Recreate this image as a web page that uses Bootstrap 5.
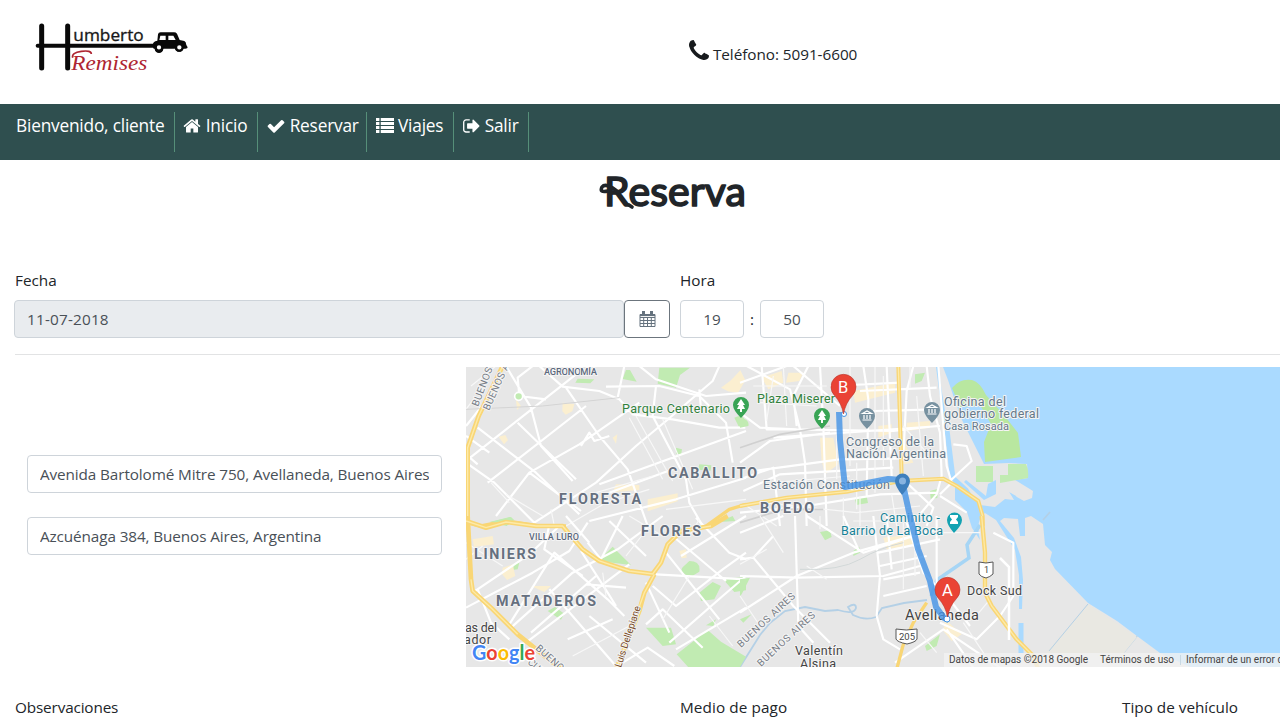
<!DOCTYPE html>
<html lang="es">
<head>
<meta charset="utf-8">
<meta name="viewport" content="width=device-width, initial-scale=1">
<title>Humberto Remises - Reserva</title>
<link href="https://cdn.jsdelivr.net/npm/bootstrap@5.3.0/dist/css/bootstrap.min.css" rel="stylesheet">
<style>
html,body{overflow:hidden;height:720px}
body{font-family:"Open Sans","Noto Sans",sans-serif;font-size:15.3px;color:#212529;line-height:24px}
.page-clip{width:100%;height:720px}
.page-wide{width:1330px}
.half-col{width:665px;flex:none}
.site-head{height:104px}
.head-phone{padding:40px 0 0 24px;letter-spacing:-.05px}
.main-nav{height:56px;background:#2f4f4f;padding:8px 7px;font-size:17.3px;letter-spacing:-.2px}
.main-nav a{color:#fff;text-decoration:none;height:40px;padding:0 9px;line-height:27px;border-right:1px solid #568f79;white-space:nowrap}
.main-nav svg{fill:#fff;vertical-align:-3px}
.page-title{width:1349px;height:48px;font-size:42px;margin:3px 0 0}
.form-control{height:38px;font-size:15.3px;letter-spacing:-.11px;color:#495057;border-color:#ced4da;border-radius:4px;padding:6px 12px}
.form-control:disabled{background:#e9ecef}
.date-in{width:610px;flex:none;letter-spacing:.2px}.time-in{width:64px;text-align:center}
.cal-btn{width:46px;height:38px;flex:none;border:1px solid #6c757d;border-radius:4px;background:#fff}
.fields{margin-top:57px}
.fields label{margin-bottom:8px}
.rule{height:1px;background:#e2e3e4;margin:16px 0 12px 15px}
.addr-col{width:466px;flex:none;padding:88px 0 0 27px}
.addr{width:415px}
.map text{font-family:Roboto,"Liberation Sans",sans-serif;fill:#5b687c;stroke:#f4f4f4;stroke-width:2px;paint-order:stroke;stroke-linejoin:round}
.map .hood{font-weight:700;font-size:14.3px;fill:#66707f}
.map .poi{font-size:12.5px;fill:#657889}
.map .park{font-size:12.5px;fill:#31813c}
.map .town{font-size:12.5px;fill:#444}
.map .plain{stroke:none}
.road{fill:none;stroke:#fff;stroke-width:6.5;stroke-linejoin:round}
.lane{fill:none;stroke:#f8f8f8;stroke-width:3.5}
.hwy{fill:none;stroke:#f9d675;stroke-linejoin:round}
.hwy-core{fill:none;stroke:#fdeaa8;stroke-width:4}
.grn{fill:#c1ebb2}
.blk{fill:#fbefd0}
.wat{fill:#aadaff}
</style>
</head>
<body class="bg-white">
<div class="page-clip overflow-hidden"><div class="page-wide">
<header class="site-head d-flex">
  <div class="half-col ps-3">
    <svg width="190" height="75" viewBox="0 0 570 225" style="margin:10px 0 0 4px">
      <g fill="none" stroke="#090909" stroke-linecap="round"><path stroke-width="15" d="M65 48V174M143 48V174"/><path stroke-width="12" d="M53 107H410"/></g>
      <path fill="#090909" d="M398 106q0-12 14-14l2-19q1-6 8-6h40q6 0 9 4l8 19 14 3q5 2 6 12l4 7q0 4-7 4h-6a13 13 0 0 1-25 0h-35a13 13 0 0 1-26 0h-3q-3-2-3-10z"/>
      <path fill="#fff" d="M418 90l3-13h16v13zM445 77h15l7 13h-22z"/>
      <g fill="#fff" stroke="#090909" stroke-width="7"><circle cx="417" cy="112" r="10"/><circle cx="478" cy="112" r="10"/></g>
      <text x="160" y="94" font-family="Open Sans" font-size="49" textLength="211" lengthAdjust="spacingAndGlyphs" fill="#181818" stroke="#181818">umberto</text>
      <text x="154" y="180" font-family="Liberation Serif" font-style="italic" font-size="60" textLength="228" lengthAdjust="spacingAndGlyphs" fill="#ae2532">Remises</text>
      <path d="M158 143q-4-15 26-19t30 8" fill="none" stroke="#ae2532" stroke-width="5"/>
    </svg>
  </div>
  <div class="head-phone"><svg width="20" height="20" viewBox="0 0 1408 1408" style="vertical-align:0"><path fill="#171a1d" d="M1408 1112q0 27-10 70.5t-21 68.500q-21 50-122 106-94 51-186 51-27 0-52.500-3.500t-57.500-12.500-47.500-14.500-55.500-20.500-49-18q-98-35-175-83-128-79-264.500-215.500t-215.500-264.500q-48-77-83-175-3-9-18-49t-20.500-55.500-14.500-47.500-12.500-57.500-3.500-52.500q0-92 51-186 56-101 106-122 25-11 68.500-21t70.500-10q14 0 21 3 18 6 53 76 11 19 30 54t35 63.500 31 53.500q3 4 17.500 25t21.500 35.500 7 28.500q0 20-28.500 50t-62 55-62 53-28.500 46q0 9 5 22.500t8.500 20.500 14 24 11.500 19q76 137 174 235t235 174q2 1 19 11.500t24 14 20.500 8.500 22.500 5q18 0 46-28.500t53-62 55-62 50-28.500q14 0 28.500 7t35.500 21.500 25 17.500q25 15 53.500 31t63.500 35 54 30q70 35 76 53 3 7 3 21z"/></svg> <span>Teléfono: 5091-6600</span></div>
</header>
<nav class="main-nav d-flex">
  <a href="#" style="padding-right:10px">Bienvenido, cliente</a>
  <a href="#" style="padding-left:8px;padding-right:10px"><svg width="18" height="18" viewBox="30 100 1730 1600"><path d="M1472 992v480q0 26-19 45t-45 19h-384v-384h-256v384h-384q-26 0-45-19t-19-45v-480q0-1 .5-3t.5-3l575-474 575 474q1 2 1 6zm223-69l-62 74q-8 9-21 11h-3q-13 0-21-7l-692-577-692 577q-12 8-24 7-13-2-21-11l-62-74q-8-10-7-23.500t11-21.500l719-599q32-26 76-26t76 26l244 204v-195q0-14 9-23t23-9h192q14 0 23 9t9 23v408l219 182q10 8 11 21.500t-7 23.500z"/></svg> Inicio</a>
  <a href="#" style="padding-right:7px"><svg width="18" height="18" viewBox="60 100 1670 1600"><path d="M1671 566q0 40-28 68l-724 724-136 136q-28 28-68 28t-68-28l-136-136-362-362q-28-28-28-68t28-68l136-136q28-28 68-28t68 28l294 295 656-657q28-28 68-28t68 28l136 136q28 28 28 68z"/></svg> Reservar</a>
  <a href="#" style="padding-right:10px"><svg width="18" height="16" viewBox="0 0 19 16" preserveAspectRatio="none" style="vertical-align:-1px"><path d="M0 1h3.600v3H0zM0 5h3.600v3H0zM0 9h3.600v3H0zM0 13h3.600v3H0zM5 1h14v3H5zM5 5h14v3H5zM5 9h14v3H5zM5 13h14v3H5z"/></svg> Viajes</a>
  <a href="#"><svg width="17" height="18" viewBox="60 100 1620 1600"><path d="M704 1440q0 4 1 20t.5 26.500-3 23.500-10 19.500-20.500 6.500h-320q-119 0-203.500-84.500t-84.500-203.500v-704q0-119 84.500-203.500t203.500-84.500h320q13 0 22.500 9.500t9.500 22.500q0 4 1 20t.5 26.500-3 23.500-10 19.500-20.500 6.500h-320q-66 0-113 47t-47 113v704q0 66 47 113t113 47h312l11.500 1 11.500 3 8 5.500 7 9 2 13.500zm928-544q0 26-19 45l-544 544q-19 19-45 19t-45-19-19-45v-288h-448q-26 0-45-19t-19-45v-384q0-26 19-45t45-19h448v-288q0-26 19-45t45-19 45 19l544 544q19 19 19 45z"/></svg> Salir</a>
</nav>
<h1 class="page-title text-center"><svg class="d-block mx-auto" width="156" height="48" viewBox="-4 0 156 48"><text x="3" y="43" font-family="Lato" font-weight="400" font-size="41" textLength="142" fill="#212529" stroke="#212529" stroke-width="1.700" stroke-linejoin="round">Reserva</text><path fill="none" stroke="#212529" stroke-width="3.600" stroke-linecap="round" d="M17 29Q5 19 1 24Q-2 30 7 28M28 42L31 44"/></svg></h1>
<div class="fields d-flex">
  <div class="half-col" style="padding-left:14px"><label class="d-block" style="padding-left:1px">Fecha</label>
    <div class="d-flex"><input class="form-control date-in" value="11-07-2018" disabled><button class="cal-btn p-0" aria-label="Calendario"><svg class="d-block mx-auto" width="17" height="18" viewBox="0 0 17 18" fill="none" stroke="#65727e"><path d="M1 4.500h15v12H1zM1 7.500h15M1 10.500h15M1 13.500h15M4.700 7v10M8.500 7v10M12.300 7v10"/><path stroke-width="1.200" d="M1 5.500h15"/><path stroke-width="3" d="M4.500 1v4.500M12.500 1v4.500"/></svg></button></div></div>
  <div style="padding-left:15px"><label class="d-block">Hora</label>
    <div class="d-flex align-items-center"><input class="form-control time-in" value="19"><span class="text-center" style="width:16px">:</span><input class="form-control time-in" value="50"></div></div>
</div>
<div class="rule"></div>
<div class="d-flex">
  <div class="addr-col d-flex flex-column gap-4"><input class="form-control addr" value="Avenida Bartolomé Mitre 750, Avellaneda, Buenos Aires"><input class="form-control addr" value="Azcuénaga 384, Buenos Aires, Argentina"></div>
  <svg class="map d-block" width="849" height="300" viewBox="466 367 849 300">
    <rect x="466" y="367" width="849" height="300" fill="#e7e7e7"/>
    <!-- shore and river -->
    <path class="wat" d="M936 367H1315V667H1190L1160 653L1137 636L1117 621L1088 603L1055 569L1050 560L1052 552L1045 545L1043 524L1031 516L1025 518L1025 536L1020 536L1018 519L1004 518L1000 521L1014 538L1021 557L1023 580L1022 609H1019L1019 575L1015 550L996 520L985 513Q975 520 980 540L972 528L967 512L955 500L955 480L949 470L945 425L939 390z"/>
    <path fill="#e7e7e7" d="M943 367L948 380L954 398L962 420L984 464L1008 463L1027 464L1028 478L1015 480L1033 491L1032 498L1024 501L1010 493L1014 500L1005 499L995 507L980 505L960 485L953 480L948 430L938 367z"/>
    <path class="grn" style="fill:#b9e7a0" d="M952 388Q960 378 972 380Q980 382 986 395L1004 415L1018 433L1021 457L985 462L984 442L991 424L980 405L960 407z"/>
    <path class="grn" d="M976 466h17v16h-17zM1008 464h18q3 6 2 14l-28 5v-8h8z"/>
    <path class="wat" d="M988 484l8-4v14l-12 6-20-18 2-2 20 16zM1009 492l7 4 0 5z"/>
    <path fill="none" stroke="#aadaff" stroke-width="5" d="M947 430L953 478L966 490L978 510M1021 623V653"/>
    <path fill="none" stroke="#a6d5f5" stroke-width="3.500" d="M980 525L967 545L969 558L950 571L937 580L931 596"/>
    <path fill="none" stroke="#b4d0e6" stroke-width="1.800" d="M927 600L904 603L882 608L876 617Q865 621 853 615L848 607Q856 602 856 608Q854 615 838 610L825 611L805 607L785 611L770 623L760 635L740 667M1124 652L1137 636M1043 520L1050 512"/>
    <path fill="#e9e8e2" d="M1088 604L1137 637L1124 653L1150 660H1040z"/>
    <path stroke="#b4d0e6" d="M1049 651L1088 604"/>
    <!-- north west -->
    <g transform="translate(466 366) scale(.33333)">
      <path class="grn" d="M480 12l12 0 20 35-42-8zM580 5h92l-30 22-12 38-55-12zM335 38l50 2-12 12-45-2zM630 245l18 5-3 18-15-5zM700 295l36 3-2 16-38-3zM70 468l62-15 10 9-20 18zM805 155q30-15 35 18l-20 12z"/>
      <path class="blk" d="M765 65l30-22 28-30 15 30-22 38-30-5zM290 110l35 4-6 22-20 10-10-10zM98 212l20-5 8 15-12 13zM440 215l14-10-4 28zM450 355l70 2v15l-80 7zM545 400l90-18v24l-90 30zM150 100l15 20-12 12z"/>
      <path class="road" d="M0 285L330 25M90 450L190 320L340 235L520 110M65 350L360 120M190 320L345 435M35 185L210 320L340 445M0 265L35 295M155 170L330 340M220 0L290 62L400 75L460 100L500 145L620 160L760 185L838 185M120 0L195 125L225 240L320 345M300 65L400 210L485 310L545 480M455 95L475 0M570 60L560 150L660 340L670 410L710 480M420 62L580 60L700 90L780 170L800 290M520 0L570 40L720 90L840 80M0 290L85 350L205 470M390 350L510 240L600 165L740 45L760 0M400 355L840 195M205 470L390 350M430 380L620 310M345 240L370 200L385 225L430 210M0 180L60 105M200 0L155 35L160 90L240 100M370 465L630 400L840 335M0 210L70 260M700 70L705 130"/>
      <path class="lane" d="M490 155L590 340M510 150L620 345M590 160L680 370M75 350L130 410M120 385L230 450M600 430L840 400M390 380L560 330M300 480L420 410L550 370M255 430L265 480M15 60L90 0M0 130L30 90"/>
      <path d="M0 130L230 120L460 95" stroke="#d4d4d4" stroke-width="3" fill="none"/>
      <path class="hwy" stroke-width="14" d="M110 0L38 150L5 245L5 480"/><path class="hwy-core" d="M110 0L38 150L5 245L5 480"/><path class="hwy" stroke-width="10" d="M0 470L45 480L120 465L220 480L300 480M720 480L790 430L840 415"/>
      <circle cx="158" cy="91" r="12" class="grn" stroke="#fff" stroke-width="5"/>
    </g>
    <!-- south west -->
    <g transform="translate(466 516) scale(.33333)">
      <path class="grn" d="M440 92l55 55-100-12zM145 145l15-5-5 20-16 2zM245 285l22-12 28 20-10 18zM670 135q35 0 30 32l-25 15q-38-12-25-28zM700 230l40-32 25 12-20 40-40 5zM770 188l70-5v40l-35 5zM540 335h75l15 50-40 5zM725 342l40 35 75 45-20 35H670l-38-42zM750 310l-8 20-22-2zM75 18l60-15 10 10-35 8zM760 18l40-18 8 15z"/>
      <path class="blk" d="M110 155l30-10 8 35-25 12-15-18zM20 70l60-10 4 25-60 8zM195 210l60 0-20 18zM640 105l20-5 2 25-15 2z"/>
      <path class="road" d="M0 275L200 170L310 105L365 20M20 230L190 115L280 30M250 220L445 445M35 220L75 320L130 370M130 325L265 110L425 250L475 300M135 335L320 170L455 100L590 0M180 380L490 145M195 350L390 180M360 205L480 215M250 25L235 100L350 180M345 105L425 230L450 270M365 80L405 130L470 0M430 15L540 120M300 0L370 80M570 175L840 190M600 110L700 235L760 310M620 60L780 195M560 210L630 270L770 160L840 110M645 120L840 0M690 5L790 110L840 130M540 325L590 280L710 395M610 380L770 240L840 180M630 400L840 275M470 440L545 395L625 450M370 300L540 440M305 370L440 310M540 200L610 350"/>
      <path class="lane" d="M0 130L50 90M410 170L420 240M320 420L490 330M490 0L590 60M550 30L480 120M670 60L700 10M670 180L590 310M730 300L800 390M0 80L110 150"/>
      <path class="hwy" stroke-width="14" d="M5 0L15 190L20 225L75 275L155 355L260 440L290 460"/><path class="hwy" stroke-width="14" d="M0 15L60 35L120 18L210 30L290 30L315 60L350 100L400 135L490 165L560 174L585 140L605 85L645 45L735 30L785 0M565 175L535 230L520 285L450 460"/>
      <path class="hwy-core" d="M0 15L60 35L120 18L210 30L290 30L315 60L350 100L400 135L490 165L560 174L585 140L605 85L645 45L735 30M565 175L535 230L455 450M15 190L20 225L75 275L155 355"/>
    </g>
    <!-- centre -->
    <g transform="translate(740 366) scale(.33333)">
      <path class="grn" d="M0 155q30 5 25 25l-25 5zM525 25l30-5-10 25-20 8zM570 375l25-7-3 28-20 2zM345 400l35-9 4 20-35 6z"/>
      <path class="blk" d="M65 35l60-20 5 35-45 20zM145 20h45l-12 25-40 5zM340 75l125-25 0 30-120 30zM240 215l40 0 15 80-40 30-10-40zM415 180l40-5v25l-40 15zM500 170l70-5v20l-70 10zM490 220l30 70-30 5z"/>
      <path class="road" d="M0 50L140 0M20 0L150 70L180 190L195 290L200 480M65 0L80 190L170 190M205 0L160 90L170 180M0 140L60 185L170 190L460 195L590 180M100 215L600 180M0 290L90 225L270 200M160 0L300 120M370 0L385 100L380 390M240 0L250 180L260 480M440 0L455 330M520 0L500 75L490 270M560 0L570 90L600 200L605 330L590 385L510 480M595 0L620 300L635 350L600 385M270 60L480 50M360 75L590 65M400 135L590 130M40 315L300 280L620 275M10 375L120 325L460 305M0 440L200 420L420 385L590 380M600 390L680 440M630 345L695 285L680 240L640 235M0 340L100 305L120 480M500 350L580 425L560 480"/>
      <path class="lane" d="M40 60H260M60 110L230 120M100 30L80 165M130 0L140 180M330 0V300M405 0V380M430 30V300M490 180L560 260M530 90L550 330M290 205V340M350 290V430M100 350L330 330M70 410L350 440L540 420M310 395V480M360 390V480M20 420L110 480M455 385L470 480M510 0V65"/>
      <path d="M0 245L120 205L270 180M0 470L130 430L250 430" fill="none" stroke="#d0d0d0" stroke-width="5"/>
      <path class="hwy" stroke-width="12" d="M475 0L485 330M0 420L140 395L320 377L480 345L610 338L650 360L715 405L728 450V480"/>
      <path class="hwy-core" d="M475 0L485 330M0 420L140 395L320 377L480 345L610 338L650 360L715 405L728 450V480"/>
    </g>
    <!-- south -->
    <g transform="translate(740 516) scale(.33333)">
      <path class="grn" d="M240 48l30-5 5 20-20 10zM340 105l18-13 2 18-20 10zM0 190l30-5-25 50-5 5zM555 390l45-35-10 35-30 15zM0 310l35-15-25 25z"/>
      <path class="blk" d="M430 65l90-10v35l-80 10zM615 310l50 45-30 20-25-30z"/>
      <path class="road" d="M0 50L130 0M0 180L170 185L430 180L540 150M0 290L170 180L340 110L590 40M165 0L175 330M200 0L370 110L520 60M310 0L355 100M0 130L40 125L100 60M400 0L420 180L410 300M440 0L455 160M500 20L550 170L600 220M415 110L600 70M420 150L560 120M430 190L540 170M430 240L560 210M410 300L430 370L480 400M465 440L610 340L780 455M600 320L710 370L780 300L820 240V80L760 50M620 340L700 455M590 0V200L690 330M40 125L160 270L270 380M175 330L220 380"/>
      <path class="lane" d="M240 0V40M60 0L130 110M340 15H430M490 20V220M525 60V180M610 50H720M670 320L760 455M540 350L590 410M0 240L60 330M200 150L260 190M0 145L80 100M750 250L700 310"/>
      <path d="M180 160Q300 165 360 130T490 80" fill="none" stroke="#d2d8d8" stroke-width="3"/>
      <path class="hwy" stroke-width="13" d="M725 0L735 110L735 230L755 270L800 330L830 370L880 420L895 460"/><path class="hwy" stroke-width="10" d="M560 260L520 320L490 385L470 460"/>
      <path class="hwy-core" d="M725 0L735 110L735 230L755 270L800 330L830 370L880 420"/>
    </g>
    <path fill="none" stroke="#fff" stroke-width="2.500" d="M1000 558L1009 567V640"/>
    <!-- labels -->
    <text x="544" y="375" font-size="9.500" font-weight="500" textLength="53">AGRONOMÍA</text>
    <text x="622" y="412.500" class="park" textLength="108">Parque Centenario</text>
    <text x="757" y="402.500" class="park" textLength="78">Plaza Miserer</text>
    <text x="668" y="478" class="hood" textLength="89">CABALLITO</text>
    <text x="559" y="504" class="hood" textLength="82">FLORESTA</text>
    <text x="641" y="536" class="hood" textLength="60">FLORES</text>
    <text x="760" y="513" class="hood" textLength="54">BOEDO</text>
    <text x="474" y="559" class="hood" textLength="62">LINIERS</text>
    <text x="496" y="606" class="hood" textLength="100">MATADEROS</text>
    <text x="529" y="540" font-size="9" font-weight="500" textLength="50">VILLA LURO</text>
    <text x="944" y="405.500" class="poi" textLength="62">Oficina del</text><text x="944" y="418" class="poi" textLength="95">gobierno federal</text><text x="944" y="430" class="poi" style="font-size:11px" textLength="65">Casa Rosada</text>
    <text x="846" y="445.500" class="poi" textLength="88">Congreso de la</text><text x="846" y="458" class="poi" textLength="100">Nación Argentina</text>
    <text x="763" y="488.500" class="poi" textLength="127">Estación Constitución</text>
    <text x="880" y="522" class="poi" style="fill:#168298" textLength="60">Caminito -</text><text x="841" y="534.500" class="poi" style="fill:#168298" textLength="102">Barrio de La Boca</text>
    <text x="967" y="594.500" class="town" textLength="55">Dock Sud</text>
    <text x="905" y="620" class="town" style="font-size:14.500px" textLength="74">Avellaneda</text>
    <text x="795" y="654.500" class="town" textLength="48">Valentín</text><text x="800" y="667.500" class="town" textLength="36">Alsina</text>
    <text x="465" y="631.500" class="town" textLength="32">as del</text><text x="464" y="644" class="town" textLength="27">ador</text>
    <g font-size="10">
      <text transform="translate(478 407) rotate(-69)" textLength="41" style="fill:#777d86">BUENOS</text>
      <text transform="translate(489 411) rotate(-66)" textLength="50" style="fill:#777d86">BUENOS A</text>
      <text transform="translate(741 648) rotate(-43)" textLength="75" style="fill:#777d86">BUENOS AIRES</text>
      <text transform="translate(761 667) rotate(-43)" textLength="75" style="fill:#777d86">BUENOS AIRES</text>
      <text transform="translate(535 649) rotate(42)" textLength="73" style="fill:#777d86">BUENOS AIRES</text>
      <text transform="translate(527 663) rotate(42)" style="fill:#777d86">CUP</text>
      <text transform="translate(621 668) rotate(-72)" textLength="64" style="fill:#784a25">Luis Dellepiane</text>
    </g>
    <!-- route -->
    <path fill="none" stroke="#4694e5" stroke-opacity=".82" stroke-width="6" stroke-linejoin="round" d="M839 412L840 440L845 487L862 484L888 479L902 480L909 512L918 549L930 581L936 607L944 618L949 620"/>
    <circle cx="844" cy="414" r="2.500" fill="#fff" stroke="#4694e5"/><circle cx="947" cy="619" r="3" fill="#fff" stroke="#4694e5"/>
    <!-- place pins -->
    <path fill="#39a455" d="M741 418q-8-8-8-13a8 8 0 0 1 16 0q0 5-8 13zM822 429q-8-8-8-13a8 8 0 0 1 16 0q0 5-8 13z"/>
    <path fill="#fff" d="M741 399l4 6h-2l2 4h-3v3h-2v-3h-3l2-4h-2zM822 410l4 6h-2l2 4h-3v3h-2v-3h-3l2-4h-2z"/>
    <path fill="#7791a0" d="M867 429q-8-8-8-13a8 8 0 0 1 16 0q0 5-8 13zM932 423q-8-8-8-13a8 8 0 0 1 16 0q0 5-8 13z"/>
    <path fill="none" stroke="#fff" stroke-width="1.200" d="M862.500 413.500l4.500-2.500 4.500 2.500zM864 415v4M867 415v4M870 415v4M862.500 420h9M927.500 407.500l4.500-2.500 4.500 2.500zM929 409v4M932 409v4M935 409v4M927.500 414h9"/>
    <path fill="#13a2b2" d="M954 533q-7-8-7-13a7.500 7.500 0 0 1 15 0q0 5-8 13z"/><path fill="#fff" d="M950 515h8v2l-2 2.500 2 2.500v2h-8v-2l2-2.500-2-2.500z"/>
    <path fill="#3e7fbd" d="M902 495q-7-9-7-14a7.500 7.500 0 0 1 15 0q0 5-8 14z"/><circle cx="902.500" cy="481" r="3.500" fill="#87b3e0"/>
    <g fill="#fff" stroke="#575757"><path d="M979 562q7 2 14 0v12q-3 3-7 4-5-1-7-4zM896 629q10 2 21 0v10q-1 3-10 5-10-2-11-5z"/></g>
    <text x="984" y="573" class="plain" font-size="9" style="fill:#444">1</text><text x="899" y="640" class="plain" font-size="9.500" style="fill:#444">205</text>
    <g fill="#ea4335" stroke="#b7372e" stroke-width=".6"><path d="M843.500 414q-2-11-9-18.500a12.500 12.500 0 1 1 18 0q-7 7.500-9 18.500z"/><path d="M947.500 617q-2-11-9-18.500a12.500 12.500 0 1 1 18 0q-7 7.500-9 18.500z"/></g>
    <text x="838" y="392.500" class="plain" font-size="16.500" style="fill:#fff">B</text><text x="942" y="596" class="plain" font-size="16.500" style="fill:#fff">A</text>
    <text x="472" y="660" font-size="21" textLength="63" lengthAdjust="spacingAndGlyphs" style="font-family:Lato;font-weight:700;stroke:#fff;stroke-width:3px"><tspan style="fill:#4285f4">G</tspan><tspan style="fill:#ea4335">o</tspan><tspan style="fill:#fbbc05">o</tspan><tspan style="fill:#4285f4">g</tspan><tspan style="fill:#34a853">l</tspan><tspan style="fill:#ea4335">e</tspan></text>
    <rect x="944" y="653" width="371" height="14" fill="#f2f2f2" fill-opacity=".78"/><path stroke="#c9d9e3" d="M1180.500 655v10"/>
    <g font-size="10"><text x="949" y="663" class="plain" style="fill:#444" textLength="139">Datos de mapas ©2018 Google</text><text x="1100" y="663" class="plain" style="fill:#444" textLength="74">Términos de uso</text><text x="1186" y="663" class="plain" style="fill:#444">Informar de un error de Maps</text></g>
  </svg>
</div>
<div class="d-flex" style="margin-top:28px;padding-left:15px"><label class="half-col" style="letter-spacing:-.15px">Observaciones</label><label style="width:442px;flex:none;letter-spacing:.1px">Medio de pago</label><label class="text-nowrap">Tipo de vehículo</label></div>
</div></div>
<script src="https://cdn.jsdelivr.net/npm/bootstrap@5.3.0/dist/js/bootstrap.bundle.min.js"></script>
</body>
</html>
